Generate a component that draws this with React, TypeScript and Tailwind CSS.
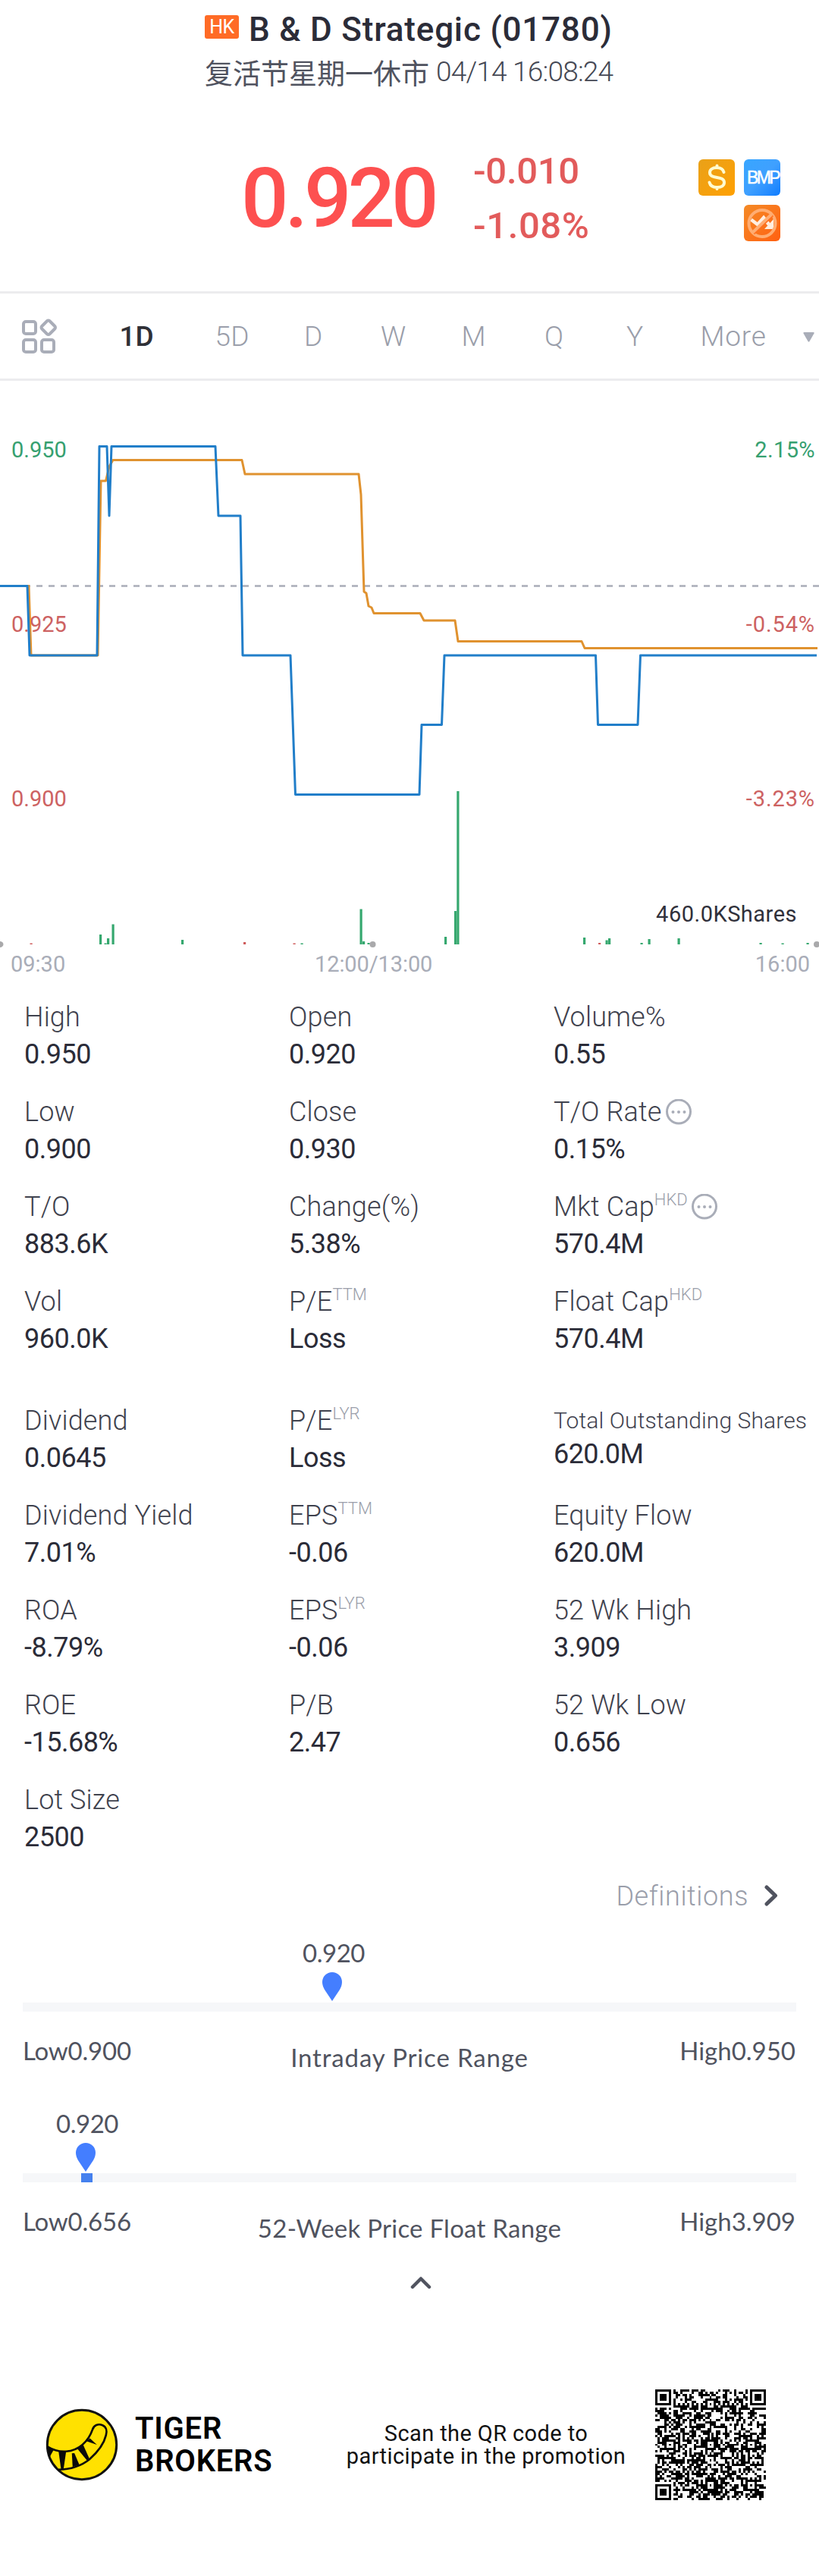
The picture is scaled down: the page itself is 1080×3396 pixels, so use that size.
import React from "react";

type Stat = {
  label: string;
  value: string;
  sup?: string;
  info?: boolean;
  compact?: boolean;
};

const GROUP_ONE: Stat[] = [
  { label: "High", value: "0.950" },
  { label: "Open", value: "0.920" },
  { label: "Volume%", value: "0.55" },
  { label: "Low", value: "0.900" },
  { label: "Close", value: "0.930" },
  { label: "T/O Rate", value: "0.15%", info: true },
  { label: "T/O", value: "883.6K" },
  { label: "Change(%)", value: "5.38%" },
  { label: "Mkt Cap", value: "570.4M", sup: "HKD", info: true },
  { label: "Vol", value: "960.0K" },
  { label: "P/E", value: "Loss", sup: "TTM" },
  { label: "Float Cap", value: "570.4M", sup: "HKD" },
];

const GROUP_TWO: Stat[] = [
  { label: "Dividend", value: "0.0645" },
  { label: "P/E", value: "Loss", sup: "LYR" },
  { label: "Total Outstanding Shares", value: "620.0M", compact: true },
  { label: "Dividend Yield", value: "7.01%" },
  { label: "EPS", value: "-0.06", sup: "TTM" },
  { label: "Equity Flow", value: "620.0M" },
  { label: "ROA", value: "-8.79%" },
  { label: "EPS", value: "-0.06", sup: "LYR" },
  { label: "52 Wk High", value: "3.909" },
  { label: "ROE", value: "-15.68%" },
  { label: "P/B", value: "2.47" },
  { label: "52 Wk Low", value: "0.656" },
  { label: "Lot Size", value: "2500" },
];

const TABS = [
  { label: "1D", cls: "w-[126px] font-medium text-[#2f3036]" },
  { label: "5D", cls: "w-[126px] text-[#9a9eaa]" },
  { label: "D", cls: "w-[88px] text-[#9a9eaa]" },
  { label: "W", cls: "w-[123px] text-[#9a9eaa]" },
  { label: "M", cls: "w-[89px] text-[#9a9eaa]" },
  { label: "Q", cls: "w-[123px] text-[#9a9eaa]" },
  { label: "Y", cls: "w-[90px] text-[#9a9eaa]" },
  { label: "More", cls: "w-[170px] text-[#9a9eaa] tracking-[0.8px]" },
];

function Header() {
  return (
    <header className="h-[384px]">
      <div className="flex h-[78px] items-center pl-[270px]">
        <span className="mt-[-8px] flex h-[31px] w-[45px] items-center justify-center rounded-[3px] bg-[#ff6b26] text-[25px] leading-none tracking-[-0.5px] text-white">
          HK
        </span>
        <h1 className="ml-[13px] whitespace-nowrap text-[44px] font-medium leading-[78px] tracking-[0.8px] text-[#2b2c38]">
          B &amp; D Strategic (01780)
        </h1>
      </div>
      <div className="flex h-9 items-center whitespace-pre pl-[270px] text-[37px] leading-9 text-[#50535f]">
        <span className="mt-[-2px] font-['Noto_Sans_CJK_SC',sans-serif]">复活节星期一休市</span>
        <span className="ml-[9px] mt-[-2px] font-light tracking-[-0.8px] text-[#454854]">04/14 16:08:24</span>
      </div>
      <div className="flex items-center pl-[306px] pt-[76px]">
        <div className="w-[315px] pl-[12px] text-[110px] font-medium leading-[144px] tracking-[-5px] text-[#fd5050]">
          0.920
        </div>
        <div className="w-[300px] pl-[3px] text-[49px] font-medium leading-[72px] text-[#e25b5b]">
          <div className="tracking-[-0.3px]">-0.010</div>
          <div className="tracking-[0.6px]">-1.08%</div>
        </div>
        <Badges />
      </div>
    </header>
  );
}

function Badges() {
  return (
    <div className="mt-[4px] grid grid-cols-[48px_48px] gap-3">
      <div className="flex size-12 items-center justify-center rounded-[6px] bg-linear-to-br from-[#e9a118] to-[#ffa000]">
        <svg width="48" height="48" viewBox="0 0 48 48" fill="none" stroke="#fffbd0" strokeWidth="4" strokeLinecap="round">
          <path d="M33.500 17c-1-4-4.500-6-9.500-6-5.500 0-9 2.600-9 6.500C15 27 34 21 34 30.500c0 4-3.500 6.500-9.500 6.500S15.500 34.500 14.500 30.500M24.500 8.500v2M24.500 37v2" />
        </svg>
      </div>
      <div className="flex size-12 items-center justify-center rounded-[6px] bg-linear-to-br from-[#38a6ff] via-[#3fa0ff] to-[#0c7cff] font-['Liberation_Sans',sans-serif] text-[23px] leading-none tracking-[-2.6px] text-white [-webkit-text-stroke:0.5px_white]">
        <span className="mr-[-2px]">BMP</span>
      </div>
      <div className="col-start-2 size-12 rounded-[6px] bg-linear-to-br from-[#f48a26] to-[#ff5f10]">
        <svg width="48" height="48" viewBox="0 0 48 48" fill="none">
          <path d="M9.500 19.500 18 26l8-9 7 9" stroke="#ffeee0" strokeWidth="4.600" />
          <path d="M39 19v13H27z" fill="#ffeee0" />
          <circle cx="24" cy="24.500" r="17.500" stroke="#ffad72" strokeWidth="4" />
          <path d="M13 38 38 14" stroke="#ff7020" strokeWidth="3" />
          <path d="M11.500 36.500 36.500 12.500" stroke="#ffad72" strokeWidth="4" />
        </svg>
      </div>
    </div>
  );
}

function Tabs() {
  return (
    <nav className="flex h-[118px] items-center border-y-[3px] border-[#ececee] text-[37px] font-light">
      <svg className="mt-[-2px] w-[117px] shrink-0" height="80" viewBox="0 0 117 80" fill="none" stroke="#a9adb8" strokeWidth="4">
        <rect x="31" y="22" width="16" height="16" rx="3" />
        <rect x="31" y="46" width="16" height="16" rx="3" />
        <rect x="55" y="46" width="16" height="16" rx="3" />
        <rect x="56.500" y="22.500" width="14.500" height="14.500" rx="2.500" transform="rotate(45 63.750 29.750)" />
      </svg>
      {TABS.map((t) => (
        <span key={t.label} className={"pt-px text-center leading-[112px] " + t.cls}>
          {t.label}
        </span>
      ))}
      <svg className="ml-[7px] mt-[3px] shrink-0" width="15" height="13" viewBox="0 0 15 13" fill="#a9adb8">
        <path d="M1.500 0h12q1.500 0 1 1.500L8.500 12q-1 1.500-2 0L.5 1.500Q0 0 1.500 0" />
      </svg>
    </nav>
  );
}

const BASE = 745;
// x, top, rising
const VOLUME: [number, number, boolean][] = [
  [41, 743.5, false], [132.5, 732, true], [139, 743.5, true], [142.5, 737, true],
  [149, 718.5, true], [240.500, 739, true], [322.500, 742, false], [388, 743.5, false],
  [398, 743.5, true], [476, 698.5, true], [479.500, 741, true], [486, 743, true],
  [587.500, 735, true], [600.500, 701, true], [603.800, 543, true], [770.500, 736, true],
  [790.500, 743, false], [800, 739.500, true], [803.500, 737, true], [846, 743, true],
  [856, 738, true], [895, 737, true], [1003, 743, true], [1032, 743.5, true], [1065, 743, true],
];

function Chart() {
  return (
    <section className="relative mt-[-2px] h-[800px]">
      <svg className="block" width="1080" height="800" viewBox="0 0 1080 800" fill="none">
        <path d="M0 272.500H1080" stroke="#a9adb8" strokeWidth="2.500" strokeDasharray="8 8" />
        {VOLUME.map(([x, top, up]) => (
          <rect key={x} x={x - 1.5} y={top} width="3.200" height={BASE - top} fill={up ? "#36a86f" : "#cf5c5c"} />
        ))}
        <g fill="#a9a9ab">
          <ellipse cx="0" cy="745" rx="4.500" ry="4" />
          <ellipse cx="491.500" cy="745" rx="4" ry="4" />
          <ellipse cx="1077" cy="745" rx="4" ry="4" />
        </g>
      </svg>
      <div className="absolute inset-0 text-[29px] leading-[30px]">
        <span className="absolute left-[15px] top-[78px] text-[#36a070]">0.950</span>
        <span className="absolute left-[15px] top-[308px] text-[#cd6262]">0.925</span>
        <span className="absolute left-[15px] top-[538px] text-[#cd6262]">0.900</span>
        <span className="absolute right-[5px] top-[78px] tracking-[0.4px] text-[#36a070]">2.15%</span>
        <span className="absolute right-[5px] top-[308px] tracking-[0.9px] text-[#cd6262]">-0.54%</span>
        <span className="absolute right-[5px] top-[538px] tracking-[0.9px] text-[#cd6262]">-3.23%</span>
        <span className="absolute right-[29px] top-[690px] tracking-[0.5px] text-[#30313b]">460.0KShares</span>
        <span className="absolute left-[14px] top-[756px] text-[#a9adb8]">09:30</span>
        <span className="absolute left-[415px] top-[756px] tracking-[-0.1px] text-[#a9adb8]">12:00/13:00</span>
        <span className="absolute right-[12px] top-[756px] text-[#a9adb8]">16:00</span>
      </div>
      <svg className="absolute inset-0" width="1080" height="800" viewBox="0 0 1080 800" fill="none" strokeWidth="3" strokeLinejoin="round">
        <path
          stroke="#e0922f"
          d="M0 272.500H38L41 364H129L133 134H139.500L144 115L149 106.500H319L323 125H473L476 152L480 280L483 282L486 299L490 301L493 308.500H554L559 318H600L604 345.500H767L771 354.500H1078"
        />
        <path
          stroke="#217ec9"
          d="M0 272.500H36L39 364H128L131 88.500H141L144 180L147 88.500H284L288 180H317L320 364H383L389.500 547.500H553L556 455.500H582.500L586 364H785.500L788.500 455.500H841L844.500 364H1077"
        />
      </svg>
    </section>
  );
}

function InfoDot() {
  return (
    <svg className="ml-[5px] shrink-0" width="34" height="34" viewBox="0 0 34 34" fill="none">
      <circle cx="17" cy="16.500" r="15.500" stroke="#a9adb8" strokeWidth="3" />
      <g fill="#a9adb8">
        <circle cx="9.500" cy="17" r="2" />
        <circle cx="17" cy="17" r="2" />
        <circle cx="24.500" cy="17" r="2" />
      </g>
    </svg>
  );
}

function StatCell({ s }: { s: Stat }) {
  return (
    <div className="h-[125px] whitespace-nowrap">
      <div className="flex h-[50px] items-center font-light text-[#3f424e]">
        <span
          className={
            s.compact
              ? "text-[30px] leading-[50px] tracking-[0.1px]"
              : "text-[36px] leading-[50px] tracking-[0.15px]"
          }
        >
          {s.label}
        </span>
        {s.sup && (
          <span className="mb-[19px] text-[22px] font-light leading-none text-[#9a9eaa]">{s.sup}</span>
        )}
        {s.info && <InfoDot />}
      </div>
      <div
        className={
          s.compact
            ? "text-[36px] leading-[39px] tracking-[-0.6px] text-[#2b2c38]"
            : "text-[36px] leading-[48px] tracking-[-0.5px] text-[#2b2c38]"
        }
      >
        {s.value}
      </div>
    </div>
  );
}

function StatGrid({ items }: { items: Stat[] }) {
  return (
    <div className="grid grid-cols-[349px_349px_1fr] pl-8">
      {items.map((s, i) => (
        <StatCell key={i} s={s} />
      ))}
    </div>
  );
}

type RangeProps = {
  center: number;
  low: string;
  high: string;
  title: string;
  titleCls: string;
  fill?: boolean;
};

function Range({ center, low, high, title, titleCls, fill }: RangeProps) {
  return (
    <section className="h-[225px] px-[30px] font-[Lato,sans-serif] text-[33px] text-[#50535f]">
      <div className="flex w-[100px] flex-col items-center" style={{ marginLeft: center - 80 }}>
        <span className="mt-[-1px] leading-[36px] tracking-[-0.5px]">0.920</span>
        <svg className="mr-[4px] mt-2" width="26" height="38" viewBox="0 0 26 38" fill="#447eff">
          <path d="M13 0C20 0 26 5.500 26 13c0 4-1.500 7-3 10L13 38 3 23C1.500 20 0 17 0 13 0 5.500 6 0 13 0" />
        </svg>
      </div>
      <div className="mt-[2px] h-3 bg-[#f6f7f9]">
        {fill && <div className="ml-[77px] h-3 w-[15px] bg-[#4580ee]" />}
      </div>
      <div className="mt-[32px] flex h-[38px] items-start justify-between leading-[38px]">
        <span className="w-[200px] tracking-[-0.2px]">
          Low{low}
        </span>
        <span className={"mt-[9px] whitespace-nowrap " + titleCls}>{title}</span>
        <span className="w-[200px] pr-px text-right">
          High{high}
        </span>
      </div>
    </section>
  );
}

const QR_SIZE = 49;

function buildQr(): string {
  const grid: boolean[][] = [];
  let seed = 20250414;
  for (let y = 0; y < QR_SIZE; y++) {
    grid.push([]);
    for (let x = 0; x < QR_SIZE; x++) {
      seed = (seed * 1103515245 + 12345) % 2147483648;
      grid[y].push(((seed >> 16) & 255) < 132);
    }
  }
  const ring = (cx: number, cy: number, r: number) => {
    for (let dy = -r; dy <= r; dy++) {
      for (let dx = -r; dx <= r; dx++) {
        const x = cx + dx;
        const y = cy + dy;
        if (x < 0 || y < 0 || x >= QR_SIZE || y >= QR_SIZE) continue;
        const d = Math.max(Math.abs(dx), Math.abs(dy));
        grid[y][x] = r === 4 ? d !== 4 && d !== 2 : d !== 1;
      }
    }
  };
  for (let i = 8; i < QR_SIZE - 8; i++) {
    grid[6][i] = i % 2 === 0;
    grid[i][6] = i % 2 === 0;
  }
  const mid = 24;
  const end = QR_SIZE - 7;
  [[mid, 6], [6, mid], [mid, mid], [end, mid], [mid, end], [end, end]].forEach(([x, y]) => ring(x, y, 2));
  ring(3, 3, 4);
  ring(QR_SIZE - 4, 3, 4);
  ring(3, QR_SIZE - 4, 4);
  let d = "";
  grid.forEach((row, y) =>
    row.forEach((on, x) => {
      if (on) d += `M${x} ${y}h1v1h-1z`;
    }),
  );
  return d;
}

const QR_PATH = buildQr();

function TigerLogo() {
  return (
    <svg width="96" height="96" viewBox="15 15 290 290" className="shrink-0">
      <circle cx="160" cy="160" r="138" fill="#ffe100" stroke="#111" strokeWidth="9" />
      <g fill="none" stroke="#0a0a0a" strokeWidth="8" strokeLinejoin="round">
        <path d="M24 168C70 196 125 192 162 160C188 137 196 118 202 100C207 82 225 75 242 82C257 88 261 104 256 122C248 156 222 190 190 218C155 246 110 258 66 259" />
      </g>
      <g fill="#0a0a0a">
        <path d="M22 166 48 180 31 210Z" />
        <path d="M67 186 97 188 87 256 77 258Z" />
        <path d="M120 194 130 193 150 240 123 248Z" />
        <path d="M142 176 165 160 190 216 180 222Z" />
        <path d="M178 146 192 134 220 160Z" />
      </g>
    </svg>
  );
}

export default function App() {
  return (
    <main className="h-[3396px] w-[1080px] overflow-hidden bg-white font-[Roboto,'Noto_Sans_CJK_SC',sans-serif]">
      <Header />
      <Tabs />
      <Chart />
      <section className="pt-4">
        <StatGrid items={GROUP_ONE} />
        <div className="h-8" />
        <StatGrid items={GROUP_TWO} />
      </section>
      <div className="flex h-[84px] items-start justify-end pr-[54px] pt-[2px] text-[36px] font-light leading-[50px] tracking-[0.6px] text-[#9a9eaa]">
        <span>Definitions</span>
        <svg className="ml-[21px] mt-[10px]" width="18" height="28" viewBox="0 0 18 28" fill="none" stroke="#50535f" strokeWidth="5" strokeLinecap="round" strokeLinejoin="round">
          <path d="M3 3 14.500 14 3 25" />
        </svg>
      </div>
      <Range center={440} low="0.900" high="0.950" title="Intraday Price Range" titleCls="tracking-[0.85px]" />
      <Range center={115} low="0.656" high="3.909" title="52-Week Price Float Range" titleCls="tracking-[0.25px]" fill />
      <div className="mt-[-7px] flex h-[143px] justify-center pl-[30px]">
        <svg width="28" height="18" viewBox="0 0 28 18" fill="none" stroke="#50535f" strokeWidth="4.500" strokeLinecap="round" strokeLinejoin="round">
          <path d="M3 15 14 4 25 15" />
        </svg>
      </div>
      <footer className="flex h-[160px] items-center pl-[60px]">
        <TigerLogo />
        <div className="ml-[22px] w-[240px] text-[40px] font-semibold leading-[43px] tracking-[0.75px] text-black">
          <div>TIGER</div>
          <div>BROKERS</div>
        </div>
        <div className="w-[446px] text-center text-[29px] leading-[30px] tracking-[0.4px] text-[#111]">
          <div>Scan the QR code to</div>
          <div>participate in the promotion</div>
        </div>
        <svg width="146" height="146" viewBox="0 0 49 49" shapeRendering="crispEdges">
          <path d={QR_PATH} fill="#000" />
        </svg>
      </footer>
    </main>
  );
}
